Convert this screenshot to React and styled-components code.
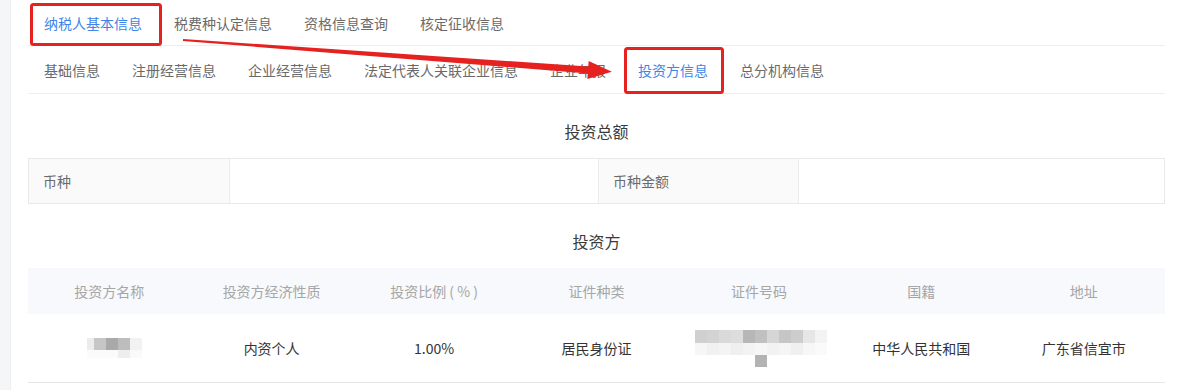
import React from 'react';
import styled, { createGlobalStyle } from 'styled-components';

const GlobalStyle = createGlobalStyle`
  *, *::before, *::after {
    box-sizing: border-box;
  }
  body {
    margin: 0;
    background: #fff;
    font-family: "Noto Sans CJK SC", "Microsoft YaHei", sans-serif;
  }
`;

const Page = styled.div`
  position: relative;
  display: flex;
  width: 1178px;
  height: 390px;
  overflow: hidden;
`;

const SideStrip = styled.div`
  width: 11px;
  background: #f5f6f8;
  border-right: 1px solid #eef0f2;
`;

const Main = styled.div`
  flex: 1;
  padding: 0 13px 0 17px;
`;

const TabRow = styled.div`
  display: flex;
  height: ${p => p.$h}px;
  border-bottom: 1px solid #eeeeee;
`;

const Tab = styled.div`
  display: flex;
  align-items: center;
  padding: 0 16px;
  font-size: 14px;
  line-height: 20px;
  color: ${p => (p.$active ? '#3d86e8' : '#6a6a6a')};
  white-space: nowrap;
`;

const SectionTitle = styled.div`
  padding-top: 27px;
  margin-bottom: 17px;
  text-align: center;
  font-size: 16px;
  line-height: 20px;
  color: #3a3a3a;
`;

const SumTable = styled.div`
  display: grid;
  grid-template-columns: 200px 369px 200px 1fr;
  height: 46px;
  border: 1px solid #e9e9e9;
`;

const SumCell = styled.div`
  display: flex;
  align-items: center;
  padding-left: 14px;
  font-size: 14px;
  color: #6a6a6a;
  background: ${p => (p.$label ? '#fafafa' : '#fff')};
  border-left: ${p => (p.$first ? 'none' : '1px solid #ececec')};
`;

const Grid = styled.div`
  display: grid;
  grid-template-columns: repeat(7, 1fr);
`;

const HeadRow = styled(Grid)`
  height: 46px;
  background: #f7f9fc;
`;

const BodyRow = styled(Grid)`
  height: 69px;
  border-bottom: 1px solid #e6e6e6;
`;

const HeadCell = styled.div`
  display: flex;
  align-items: center;
  justify-content: center;
  font-size: 14px;
  color: #a6a6a6;
  white-space: pre;
`;

const BodyCell = styled.div`
  display: flex;
  align-items: center;
  justify-content: center;
  font-size: 14px;
  color: #333;
  padding-left: ${p => p.$shift || 0}px;
`;

const Mosaic = styled.div`
  display: flex;
  flex-direction: column;
`;

const MosaicRow = styled.div`
  display: flex;
  height: ${p => p.$h}px;
`;

const Pixel = styled.span`
  width: ${p => p.$w}px;
  background: ${p => p.$c};
`;

const Overlay = styled.svg`
  position: absolute;
  left: 0;
  top: 0;
  pointer-events: none;
`;

const nameMosaic = [
  { h: 12, px: [[7, '#ececec'], [12, '#c6c6c6'], [12, '#a9a9a9'], [12, '#bdbdbd'], [12, '#f2f2f2']] },
  { h: 8, px: [[31, '#fbfbfb'], [12, '#eeeeee'], [12, '#fafafa']] },
];

const idMosaic = [
  {
    h: 13,
    px: [[12, '#d0d0d0'], [12, '#d3d3d3'], [12, '#dadada'], [12, '#dddddd'], [12, '#b7b7b7'],
      [12, '#c0c0c0'], [12, '#d6d6d6'], [12, '#c6c6c6'], [12, '#cdcdcd'], [12, '#e6e6e6'], [12, '#f3f3f3']],
  },
  {
    h: 12,
    px: [[12, '#f6f6f6'], [12, '#f1f1f1'], [12, '#f4f4f4'], [12, '#efefef'], [12, '#f3f3f3'],
      [12, '#f6f6f6'], [12, '#f2f2f2'], [12, '#f5f5f5'], [12, '#f0f0f0'], [12, '#f7f7f7'], [12, '#fafafa']],
  },
  { h: 12, px: [[60, '#fff'], [12, '#b3b3b3'], [60, '#fff']] },
];

const renderMosaic = rows => (
  <Mosaic>
    {rows.map((r, i) => (
      <MosaicRow key={i} $h={r.h}>
        {r.px.map(([w, c], j) => <Pixel key={j} $w={w} $c={c} />)}
      </MosaicRow>
    ))}
  </Mosaic>
);

const topTabs = ['纳税人基本信息', '税费种认定信息', '资格信息查询', '核定征收信息'];
const subTabs = ['基础信息', '注册经营信息', '企业经营信息', '法定代表人关联企业信息', '企业年报', '投资方信息', '总分机构信息'];
const heads = ['投资方名称', '投资方经济性质', '投资比例 ( % )', '证件种类', '证件号码', '国籍', '地址'];

export default function App() {
  return (
    <>
      <GlobalStyle />
      <Page>
        <SideStrip />
        <Main>
          <TabRow $h={46}>
            {topTabs.map((t, i) => <Tab key={t} $active={i === 0}>{t}</Tab>)}
          </TabRow>
          <TabRow $h={48}>
            {subTabs.map(t => <Tab key={t} $active={t === '投资方信息'}>{t}</Tab>)}
          </TabRow>

          <SectionTitle>投资总额</SectionTitle>
          <SumTable>
            <SumCell $label $first>币种</SumCell>
            <SumCell />
            <SumCell $label>币种金额</SumCell>
            <SumCell />
          </SumTable>

          <SectionTitle>投资方</SectionTitle>
          <HeadRow>
            {heads.map(h => <HeadCell key={h}>{h}</HeadCell>)}
          </HeadRow>
          <BodyRow>
            <BodyCell $shift={10}>{renderMosaic(nameMosaic)}</BodyCell>
            <BodyCell>内资个人</BodyCell>
            <BodyCell>1.00%</BodyCell>
            <BodyCell>居民身份证</BodyCell>
            <BodyCell $shift={4}>{renderMosaic(idMosaic)}</BodyCell>
            <BodyCell>中华人民共和国</BodyCell>
            <BodyCell>广东省信宜市</BodyCell>
          </BodyRow>
        </Main>

        <Overlay width="1178" height="390" viewBox="0 0 1178 390">
          <rect x="31.5" y="4.5" width="129" height="40" rx="2" fill="none" stroke="#e5221f" strokeWidth="3" />
          <rect x="625.5" y="48.5" width="97" height="44" rx="2" fill="none" stroke="#e5221f" strokeWidth="3" />
          <polygon
            fill="#e5221f"
            points="183.07,39 182.93,41 587.74,73.49 587.33,78.98 611.9,71.77 588.67,61.02 588.26,66.51"
          />
        </Overlay>
      </Page>
    </>
  );
}
